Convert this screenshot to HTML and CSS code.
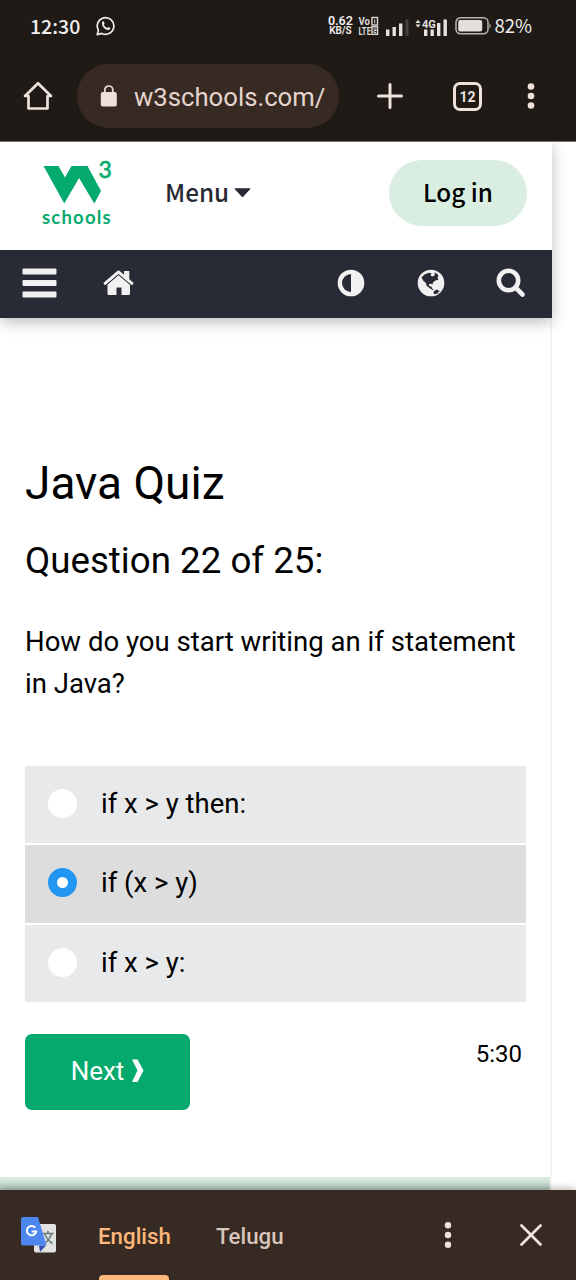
FILE: index.html
```html
<!DOCTYPE html>
<html lang="en">
<head>
<meta charset="utf-8">
<title>Java Quiz</title>
<link rel="stylesheet" href="styles.css">
</head>
<body>
<div class="phone">
  <div class="status">
    <span class="clock">12:30</span>
    <svg class="whatsapp" width="20" height="20" viewBox="0 0 20 20" fill="none"><path d="M1.200 18.600 2.400 14.200A8.300 8.300 0 1 1 5.800 17.400Z" stroke="#eee" stroke-width="1.700" stroke-linejoin="round"/><path d="M6.100 6.200C6.500 5.200 7.500 5 7.900 5.800L8.600 7.500 7.800 8.800C8.600 10.300 9.700 11.300 11.200 12L12.400 11.100 14.300 12.100C14.600 13.200 13.200 14.300 12 14.100 8.400 13.500 5.400 9.800 6.100 6.200Z" fill="#eee"/></svg>
    <div class="status-right">
      <div class="rate"><span class="rate-num">0.62</span><span class="rate-unit">KB/S</span></div>
      <svg class="volte" width="21" height="20" viewBox="0 0 21 20" fill="#dcdad8">
        <text x="0.500" y="9" textLength="11.500" lengthAdjust="spacingAndGlyphs">Vo</text>
        <text x="0.500" y="18.500" textLength="12.500" lengthAdjust="spacingAndGlyphs">LTE</text>
        <rect x="14" y="1.500" width="5.500" height="7.500" fill="none" stroke="#dcdad8" stroke-width="1.400"/><path d="M16.750 3.500V7.500" stroke="#dcdad8"/>
        <rect x="14" y="10.800" width="5.500" height="7.500" fill="none" stroke="#dcdad8" stroke-width="1.400"/><path d="M15.500 13H18V14.600H16V16.500H18" fill="none" stroke="#dcdad8"/>
      </svg>
      <svg class="signals" width="70" height="24" viewBox="0 0 70 24">
        <g fill="#e4e2e0"><rect x="2" y="15.500" width="3.400" height="6.500"/><rect x="8.500" y="13" width="3.400" height="9"/><rect x="15" y="9.500" width="3.400" height="12.500"/><rect x="40" y="15.500" width="3.400" height="6.500"/><rect x="46.500" y="15.500" width="3.400" height="6.500"/><rect x="53" y="9" width="3.400" height="13"/><rect x="59.500" y="5.500" width="3.400" height="16.500"/><path d="M31.500 9 34 5.800 36.500 9ZM31.500 10.500 34 13.500 36.500 10.500Z"/></g>
        <rect x="21.500" y="5.500" width="3" height="16.500" fill="#45403c"/>
        <text class="net" x="38" y="13.800">4G</text>
      </svg>
      <svg class="battery" width="37" height="18" viewBox="0 0 37 18"><rect x="1" y=".800" width="32" height="16" rx="4.500" fill="none" stroke="#b9b6b3" stroke-width="1.500"/><rect x="3.200" y="3" width="24" height="11.600" rx="2" fill="#e2dfdd"/><path d="M34.500 6Q37 8.800 34.500 11.800Z" fill="#b9b6b3"/></svg>
      <span class="percent">82%</span>
    </div>
  </div>

  <div class="toolbar">
    <svg class="home" width="30" height="30" viewBox="0 0 30 30" fill="none" stroke="#efe2dc" stroke-width="2.700" stroke-linejoin="round" stroke-linecap="round"><path d="M2 15 15 2.300 28 15H24.500V27.500H5.500V15Z"/></svg>
    <div class="address">
      <svg width="18" height="22" viewBox="0 0 18 22"><rect x=".800" y="7" width="16" height="14.500" rx="2" fill="#efe0db"/><path d="M4.800 8V5A4 4 0 0 1 12.800 5V8" fill="none" stroke="#efe0db" stroke-width="1.700"/></svg>
      <span class="url">w3schools.com/</span>
    </div>
    <svg class="plus" width="26" height="26" viewBox="0 0 26 26" stroke="#efe2dc" stroke-width="3" stroke-linecap="round"><path d="M13 1.500V24.500M1.500 13H24.500"/></svg>
    <div class="tabs">12</div>
    <svg class="dots" width="8" height="26" viewBox="0 0 8 26" fill="#efe2dc"><circle cx="4" cy="3.500" r="3.300"/><circle cx="4" cy="13" r="3.300"/><circle cx="4" cy="22.500" r="3.300"/></svg>
  </div>

  <main class="viewport">
    <div class="page">
      <header class="site-head">
        <div class="top">
          <div class="logo">
            <svg width="72" height="48" viewBox="0 0 72 48"><path d="M1.500 8H16.500L23 19.500 29.500 8H45.500L59 33 52.300 45.500 37 20 22.300 45.500Z" fill="#04aa6d"/><text class="cube" x="56.500" y="20">3</text></svg>
            <span class="schools">schools</span>
          </div>
          <span class="menu">Menu</span>
          <svg class="caret" width="17" height="10" viewBox="0 0 17 10"><path d="M1 .800H16L8.500 9Z" fill="#282a35" stroke="#282a35" stroke-linejoin="round"/></svg>
          <a class="login">Log in</a>
        </div>
        <nav class="nav">
          <svg class="burger" width="35" height="30" viewBox="0 0 35 30" fill="#f1f1f1"><rect x=".500" y=".500" width="34" height="6" rx="1"/><rect x=".500" y="12" width="34" height="6" rx="1"/><rect x=".500" y="23.500" width="34" height="6" rx="1"/></svg>
          <svg class="house" width="31" height="26" viewBox="0 0 31 26" fill="#f1f1f1"><path d="M15.500 5 27 14.500V23.500Q27 25 25.500 25H18.500V17.500H13.500V25H6Q4.500 25 4.500 23.500V14.500Z"/><path d="M.300 13 14 1.200Q15.500 0 17 1.200L21 4.800V1H26.300V9.200L30.700 13 29.300 14.900Q28.500 15.300 27.900 14.800L15.500 4.200 3.100 14.800Q2.500 15.300 1.700 14.900Z"/><path d="M3.200 15 15.500 4.600 27.800 15" fill="none" stroke="#282a35" stroke-width="1"/></svg>
          <svg class="contrast" width="28" height="28" viewBox="0 0 28 28"><circle cx="14" cy="14" r="13.300" fill="#f1f1f1"/><path d="M14 5A9 9 0 0 0 14 23Z" fill="#282a35"/></svg>
          <svg class="globe" width="28" height="28" viewBox="0 0 28 28"><circle cx="14" cy="14" r="13.300" fill="#f1f1f1"/><path d="M4.500 8.500 7.500 5.500 12 3.800 14.500 4.500 13.500 6.500 15.500 7.500 18 6 17 3.500 20.500 5 21.500 7 20.500 8.500 21.500 10.500 18.500 11.500 16 13.500 15.500 15.500 13 14.500 11.500 16 13 17.500 14.500 17.500 15.200 19.800 17 20.800 15.500 21 12.500 19 9.500 16.800 9 14 6.500 12ZM17 22 20 20.500 22.500 22 20.500 24.500 17 25.200 16.500 24Z" fill="#282a35"/></svg>
          <svg class="search" width="30" height="30" viewBox="0 0 30 30" fill="none" stroke="#f1f1f1" stroke-linecap="round"><circle cx="12.500" cy="12.500" r="9.700" stroke-width="4.600"/><path d="M20 20 26.500 26.500" stroke-width="4.600"/></svg>
        </nav>
      </header>
      <section class="quiz">
        <h1>Java Quiz</h1>
        <h2>Question 22 of 25:</h2>
        <p class="question"><span>How do you start writing an if statement</span><br>in Java?</p>
        <div class="answers">
          <label class="answer"><span class="radio"></span><span>if x &gt; y then:</span></label>
          <label class="answer selected"><span class="radio"></span><span>if (x &gt; y)</span></label>
          <label class="answer"><span class="radio"></span><span>if x &gt; y:</span></label>
        </div>
        <div class="actions">
          <button class="next"><span>Next</span><svg width="12" height="24" viewBox="0 0 12 24"><path d="M0 .500H5.500L11.500 11.500 5.500 23H0L5.500 11.500Z" fill="#fff"/></svg></button>
          <span class="timer">5:30</span>
        </div>
      </section>
      <div class="footer-strip"></div>
    </div>
  </main>

  <div class="translate">
    <svg class="gt" width="36" height="36" viewBox="0 0 36 36"><rect x="13" y="7" width="22" height="28.500" rx="2" fill="#e2e2e0"/><path d="M22 16.500H32.500M27 14V16.500M30.500 17Q28 24 22 27.500M24 17.500Q26 23 31.500 26.500" fill="none" stroke="#667b7e" stroke-width="1.500"/><path d="M18 28.500H25L19 35Z" fill="#3949ab"/><path d="M2 0H17L25.500 28.500H2Q0 28.500 0 26.500V2Q0 0 2 0Z" fill="#4c86ee"/><path d="M14.300 10.700A4.700 4.700 0 1 0 15.200 14.500H10.700" fill="none" stroke="#fff" stroke-width="2"/></svg>
    <div class="lang active">English</div>
    <div class="lang other">Telugu</div>
    <svg class="more" width="8" height="26" viewBox="0 0 8 26" fill="#f3e3dc"><circle cx="4" cy="3.300" r="3.200"/><circle cx="4" cy="13" r="3.200"/><circle cx="4" cy="22.700" r="3.200"/></svg>
    <svg class="close" width="22" height="22" viewBox="0 0 22 22" stroke="#f3e3dc" stroke-width="2.700" stroke-linecap="round"><path d="M1.500 1.500 20.500 20.500M20.500 1.500 1.500 20.500"/></svg>
  </div>
</div>
</body>
</html>
```
FILE: styles.css
```css
* { box-sizing: border-box; }
body { margin: 0; font-family: Roboto, sans-serif; background: #fff; }
svg { display: block; flex: none; }
.phone { width: 576px; height: 1280px; display: flex; flex-direction: column; overflow: hidden; }

.status { height: 52px; background: #1f1a16; display: flex; align-items: center; color: #f1efed; padding-left: 30px; flex: none; }
.clock { font: 500 19.500px/24px "Noto Sans CJK SC", sans-serif; width: 65.500px; }
.status-right { margin-left: auto; display: flex; align-items: center; padding-right: 44px; }
.rate { display: flex; flex-direction: column; align-items: center; width: 26px; margin-right: 5px; font-weight: 600; }
.rate-num { font-size: 12.500px; line-height: 10px; }
.rate-unit { font-size: 10px; line-height: 10px; }
.volte { margin-right: 5px; font: 700 10px Roboto, sans-serif; }
.signals { margin-right: 1px; }
.net { font: 700 11px Roboto, sans-serif; fill: #e4e2e0; }
.battery { margin-right: 2px; }
.percent { font: 400 18.500px/24px "Noto Sans CJK SC", sans-serif; padding-bottom: 2px; }

.toolbar { height: 90px; background: #1f1a16; border-bottom: 1px solid #7a736e; display: flex; align-items: center; padding: 0 0 1px 23px; flex: none; }
.address { width: 262px; height: 64px; margin-left: 24px; border-radius: 32px; background: #372a22; display: flex; align-items: center; padding-left: 23px; gap: 16px; }
.url { font-size: 25.700px; line-height: 32px; color: #e5d5ce; padding-top: 1px; }
.plus { margin-left: 38px; }
.tabs { width: 29px; height: 29px; margin-left: 50px; border: 3px solid #efe2dc; border-radius: 7px; font: 700 14px/24px Roboto, sans-serif; text-align: center; color: #efe2dc; }
.dots { margin-left: 45px; }

.viewport { height: 1048px; background: #fff; overflow: hidden; flex: none; }
.page { width: 552px; height: 1048px; border-right: 2px solid #f4f4f4; display: flex; flex-direction: column; }
.site-head { width: 552px; flex: none; box-shadow: 0 4px 14px rgba(0,0,0,.27); }
.top { height: 108px; background: #fff; display: flex; align-items: center; padding: 0 25px 7px 42px; }
.logo { width: 72px; height: 70px; display: flex; flex-direction: column; }
.logo svg { overflow: visible; }
.cube { font: 500 23px Lato, sans-serif; fill: #04aa6d; stroke: #04aa6d; stroke-width: .5px; }
.schools { font: 700 18.500px/22px Lato, sans-serif; color: #04aa6d; letter-spacing: 1.2px; }
.menu { margin-left: 51px; font: 500 24.300px/30px "Noto Sans CJK SC", sans-serif; color: #282a35; padding-bottom: 2px; }
.caret { margin-left: 5px; }
.login { margin-left: auto; width: 138px; height: 66px; border-radius: 33px; background: #d9eee1; font: 500 24.300px/64px "Noto Sans CJK SC", sans-serif; text-align: center; color: #000; }
.nav { height: 68px; background: #282a35; display: flex; align-items: center; padding: 0 0 2px 22px; }
.house { margin-left: 46px; }
.contrast { margin-left: 203px; }
.globe { margin-left: 52px; }
.search { margin-left: 51px; }

.quiz { flex: 1; padding: 135px 25px 0; color: #000; }
h1 { margin: 0; font: 400 46px/60px Roboto, sans-serif; }
h2 { margin: 24px 0 0; font: 400 36.700px/48px Roboto, sans-serif; }
.question { margin: 36px 0 0; font-size: 27.550px; line-height: 42px; white-space: nowrap; }
.answers { margin-top: 61px; display: flex; flex-direction: column; gap: 2px; width: 501px; }
.answer { height: 77px; background: #e7e9eb; display: flex; align-items: center; padding: 0 0 3px 22.500px; gap: 24.500px; font-size: 27.500px; }
.selected { background: #ddd; height: 78px; }
.radio { width: 29px; height: 29px; border-radius: 50%; background: #fff; }
.selected .radio { border: 9px solid #2196f3; }
.actions { margin-top: 32px; display: flex; justify-content: space-between; }
.next { width: 165px; height: 76px; padding: 0 0 2px; border: 0; border-radius: 7px; background: #04aa6d; color: #fff; font: 400 26px/30px Roboto, sans-serif; display: flex; align-items: center; justify-content: center; gap: 8px; }
.timer { font-size: 24px; line-height: 40px; padding-right: 3px; }
.footer-strip { width: 550px; height: 13px; background: linear-gradient(#d9eee1, #c7dbcf 60%, #b0c2b6); flex: none; }

.translate { height: 90px; background: #372a22; display: flex; align-items: center; padding-left: 21px; flex: none; box-shadow: 0 -1px 8px rgba(0,0,0,.3); }
.lang { height: 90px; font: 500 22.300px/92px Roboto, sans-serif; }
.active { margin-left: 41px; width: 72px; color: #ffb77b; white-space: nowrap; display: flex; flex-direction: column; }
.active::after { content: ""; height: 5px; margin: -7px 1px 0; border-radius: 4px 4px 0 0; background: #ffb77b; }
.other { margin-left: 46px; width: 69px; color: #d8c5bc; }
.more { margin-left: 159px; }
.close { margin-left: 68px; }
```
